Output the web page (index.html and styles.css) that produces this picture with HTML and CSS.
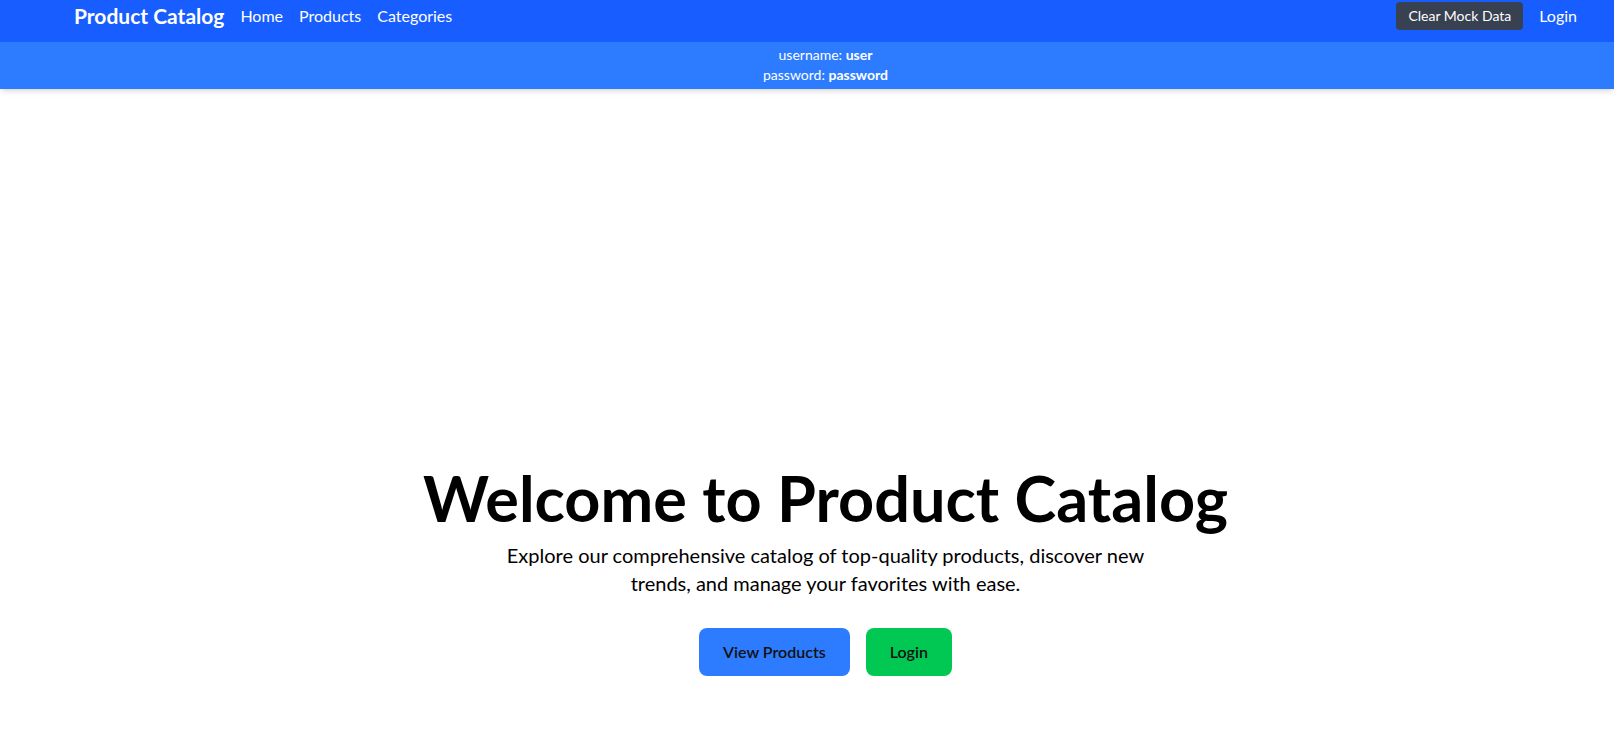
FILE: index.html
```html
<!DOCTYPE html>
<html lang="en">
<head>
<meta charset="utf-8">
<title>Product Catalog</title>
<link rel="stylesheet" href="styles.css">
</head>
<body>
<header class="header">
  <nav class="navbar">
    <div class="wrap nav-inner">
      <div class="nav-left">
        <a class="brand" href="#">Product Catalog</a>
        <a class="nav-link" href="#">Home</a>
        <a class="nav-link" href="#">Products</a>
        <a class="nav-link" href="#">Categories</a>
      </div>
      <div class="nav-right">
        <button class="clear-btn" type="button">Clear Mock Data</button>
        <a class="nav-link" href="#">Login</a>
      </div>
    </div>
  </nav>
  <div class="credentials">
    <div class="wrap cred-inner">
      <div>username: <strong>user</strong></div>
      <div>password: <strong>password</strong></div>
    </div>
  </div>
</header>
<main class="hero">
  <div class="wrap hero-inner">
    <h1 class="hero-title">Welcome to Product Catalog</h1>
    <p class="hero-text">Explore our comprehensive catalog of top-quality products, discover new trends, and manage your favorites with ease.</p>
    <div class="hero-actions">
      <a class="btn btn-blue" href="#">View Products</a>
      <a class="btn btn-green" href="#">Login</a>
    </div>
  </div>
</main>
</body>
</html>
```
FILE: styles.css
```css
* { box-sizing: border-box; }

html, body {
  margin: 0;
  padding: 0;
  background: #ffffff;
  font-family: Lato, "Open Sans", sans-serif;
  color: #000000;
}

a { text-decoration: none; color: inherit; }

.wrap {
  padding: 0 37px 0 74px;
}

.header {
  position: relative;
  z-index: 1;
  box-shadow: 0 4px 6px -1px rgba(0, 0, 0, 0.1), 0 2px 4px -2px rgba(0, 0, 0, 0.1);
}

.navbar {
  background: #175dff;
  color: #ffffff;
}

.nav-inner {
  display: flex;
  justify-content: space-between;
  align-items: center;
  padding-top: 2px;
  padding-bottom: 12px;
}

.nav-left, .nav-right {
  display: flex;
  align-items: center;
  gap: 16px;
  height: 28px;
}

.brand {
  font-size: 21px;
  line-height: 28px;
  font-weight: 700;
}

.nav-link {
  font-size: 16px;
  line-height: 24px;
}

.clear-btn {
  font-family: inherit;
  font-size: 14px;
  line-height: 20px;
  padding: 4px 12px;
  border: 0;
  border-radius: 4px;
  background: #374151;
  color: #ffffff;
  cursor: pointer;
}

.credentials {
  background: #2d7cff;
  color: #ffffff;
}

.cred-inner {
  text-align: center;
  font-size: 14px;
  line-height: 20px;
  padding-top: 3px;
  padding-bottom: 4px;
}

.cred-inner strong { font-weight: 700; }

.hero-inner {
  display: flex;
  flex-direction: column;
  align-items: center;
  text-align: center;
  padding-top: 377px;
}

.hero-title {
  margin: 0;
  font-size: 63px;
  line-height: 1;
  font-weight: 700;
}

.hero-text {
  margin: 13px 0 0;
  max-width: 672px;
  font-size: 20px;
  line-height: 27.5px;
}

.hero-actions {
  display: flex;
  gap: 16px;
  margin-top: 31px;
}

.btn {
  display: inline-block;
  padding: 12px 24px;
  border-radius: 8px;
  font-size: 16px;
  line-height: 24px;
  font-weight: 600;
  color: #111111;
}

.btn-blue { background: #2d7cff; }
.btn-green { background: #00c853; }
```
